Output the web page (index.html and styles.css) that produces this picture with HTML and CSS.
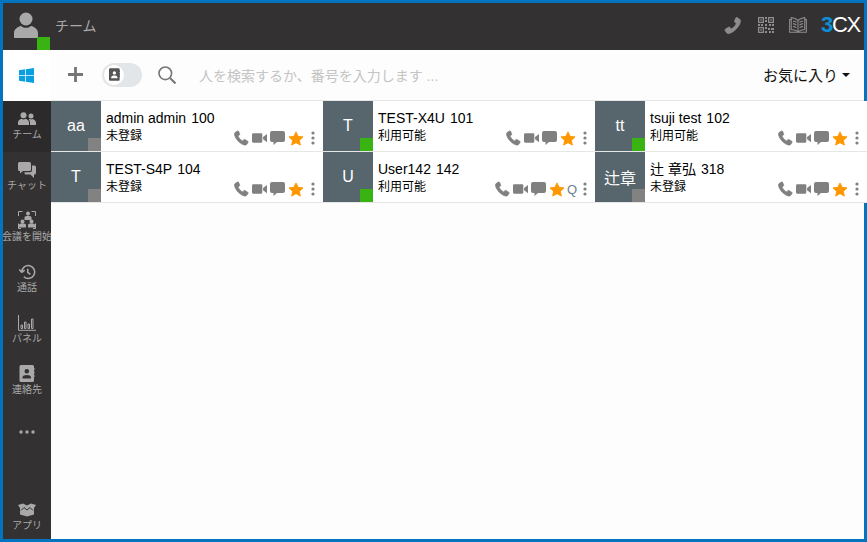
FILE: index.html
```html
<!DOCTYPE html>
<html lang="ja">
<head>
<meta charset="utf-8">
<title>チーム</title>
<link rel="stylesheet" href="styles.css">
</head>
<body>
<svg class="defs" width="0" height="0" aria-hidden="true">
  <defs>
    <symbol id="i-phone" viewBox="0 0 16 16"><path d="M3.600.6 1.200 2.200C.5 2.800.4 3.600.6 4.500c1 4.700 5.900 9.800 10.600 11 .9.200 1.700 0 2.300-.7l1.400-2.100c.3-.5.200-1-.3-1.300l-3-1.800c-.4-.2-.9-.2-1.200.2l-.9 1.100c-.2.200-.5.300-.8.100-1.700-1-3.300-2.700-4.200-4.500-.1-.3-.1-.5.100-.7l1.100-.9c.4-.3.500-.8.300-1.200L4.900.9C4.600.4 4.100.3 3.600.6Z"/></symbol>
    <symbol id="i-video" viewBox="0 0 16 12"><rect x="0" y="1" width="11" height="10" rx="1.200"/><path d="M11.800 4.800 16 1.600v8.800l-4.200-3.200Z"/></symbol>
    <symbol id="i-chat" viewBox="0 0 15 14"><path d="M2 0h11a2 2 0 0 1 2 2v7a2 2 0 0 1-2 2H7l-3.500 3v-3H2a2 2 0 0 1-2-2V2a2 2 0 0 1 2-2Z"/></symbol>
    <symbol id="i-star" viewBox="-1 -1 17 16"><path d="m7.500 0 2.200 4.700 5.300.6-3.900 3.500 1 5.200-4.600-2.600L2.900 14l1-5.200L0 5.300l5.300-.6Z" stroke="#ff9800" stroke-width="1" stroke-linejoin="round"/></symbol>
    <symbol id="i-dots" viewBox="0 0 4 14"><circle cx="2" cy="2" r="1.600"/><circle cx="2" cy="7" r="1.600"/><circle cx="2" cy="12" r="1.600"/></symbol>
    <symbol id="i-person" viewBox="0 0 24 26"><circle cx="12" cy="7" r="6.500"/><path d="M0 25v-4c0-4 4-6.500 7-7 1.500 1.300 3 1.800 5 1.800s3.500-.5 5-1.800c3 .5 7 3 7 7v4c0 .6-.4 1-1 1H1c-.6 0-1-.4-1-1Z"/></symbol>
  </defs>
</svg>
<div class="app">
  <header class="topbar">
    <div class="me">
      <svg class="me-icon"><use href="#i-person"/></svg>
      <span class="status status-on me-status"></span>
    </div>
    <span class="title">チーム</span>
    <div class="top-icons">
      <svg class="top-phone"><use href="#i-phone"/></svg>
      <svg class="top-qr" viewBox="0 0 16 16">
        <path d="M0 0h6v6H0Zm1.300 1.300v3.400h3.400V1.300ZM10 0h6v6h-6Zm1.300 1.300v3.400h3.400V1.300ZM0 10h6v6H0Zm1.300 1.300v3.400h3.400v-3.400Z"/>
        <path d="M2.300 2.300h1.400v1.400H2.300Zm10 0h1.400v1.400h-1.400Zm-10 10h1.400v1.400H2.300ZM7 0h2v2H7Zm0 3h2v2H7ZM0 7h2v2H0Zm3 0h2v2H3Zm4 0h2v2H7Zm4 0h2v2h-2Zm3 0h2v2h-2ZM7 10h2v2H7Zm3 1h2v2h-2Zm3 0h3v2h-3ZM7 14h2v2H7Zm4 0h2v2h-2Zm3 0h2v2h-2Z"/>
      </svg>
      <svg class="top-book" viewBox="0 0 20 18" fill="none" stroke-width="1.200">
        <path d="M10 4C8 2 5 1 2.500.8V14c3 .2 5.500 1 7.500 2.500 2-1.500 4.500-2.300 7.500-2.500V.8C15 1 12 2 10 4Zm0 0v12.500"/>
        <path d="M2.500 3H.7v14H10h9.300V3h-1.800M4.500 4.500c1.300.2 2.600.7 3.800 1.400M4.500 7.500c1.300.2 2.600.7 3.800 1.400M4.500 10.500c1.300.2 2.600.7 3.800 1.400M15.500 4.500c-1.300.2-2.600.7-3.800 1.400M15.500 7.500c-1.300.2-2.600.7-3.800 1.400M15.500 10.500c-1.300.2-2.600.7-3.800 1.400"/>
      </svg>
      <span class="logo3cx"><span class="logo-3">3</span>CX</span>
    </div>
  </header>
  <div class="body">
    <aside class="side">
      <div class="start">
        <svg class="win" viewBox="0 0 16 16"><path d="M0 2.300 6.500 1.400v6.200H0Zm7.300-1L16 0v7.600H7.300ZM0 8.400h6.500v6.200L0 13.700Zm7.300 0H16V16l-8.700-1.300Z"/></svg>
      </div>
      <nav class="nav">
        <a class="nav-item active">
          <svg class="nav-icon" viewBox="0 0 18 14"><circle cx="5.500" cy="3.200" r="3"/><circle cx="13" cy="4" r="2.500"/><path d="M0 13v-2.500C0 8.500 2 7 3.500 6.800c1.200.8 2.800.8 4 0C9 7 11 8.500 11 10.500V13Zm12 0v-2.500c0-1.200-.5-2.200-1.300-3 .7-.4 1-.5 1.300-.5.800.5 1.700.5 2 0 1.500.2 4 1.500 4 3.500V13Z"/></svg>
          <span>チーム</span>
        </a>
        <a class="nav-item">
          <svg class="nav-icon" viewBox="0 0 18 16"><path d="M1.500 0h10A1.500 1.500 0 0 1 13 1.500v6A1.500 1.500 0 0 1 11.500 9H5l-3 2.500V9h-.5A1.500 1.500 0 0 1 0 7.500v-6A1.500 1.500 0 0 1 1.500 0Z"/><path d="M14 3.500h2.500A1.500 1.500 0 0 1 18 5v6a1.500 1.500 0 0 1-1.500 1.500H16V16l-3.500-3.500H8A1.500 1.500 0 0 1 6.500 11v-.8h5.500A2 2 0 0 0 14 8.200Z"/></svg>
          <span>チャット</span>
        </a>
        <a class="nav-item">
          <svg class="nav-icon nav-meet" viewBox="0 0 18 18"><path d="M.5 5V.5h4M13.500.5h4V5M.5 12.500v5h2.500M15 17.500h2.500v-5" fill="none" stroke="#aaa"/><circle cx="10" cy="2.500" r="2"/><path d="M6.500 9V6.500c0-1 1.500-1.800 3.500-1.800s3.500.8 3.500 1.800V9Z"/><circle cx="4.500" cy="10.500" r="2"/><path d="M1 16.500V14c0-1 1.500-1.800 3.500-1.800S8 13 8 14v2.500Z"/><circle cx="13.500" cy="10.500" r="2"/><path d="M10 16.500V14c0-1 1.500-1.800 3.500-1.800S17 13 17 14v2.500Z"/></svg>
          <span>会議を開始</span>
        </a>
        <a class="nav-item">
          <svg class="nav-icon" viewBox="0 0 18 17"><path d="M3.500 8.500a6.800 6.800 0 1 1 2.200 5M3.500 9 .8 5.800M3.500 9l3-2.500M9.800 5v4l2.800 2" fill="none" stroke="#aaa" stroke-width="1.600"/></svg>
          <span>通話</span>
        </a>
        <a class="nav-item">
          <svg class="nav-icon" viewBox="0 0 18 16"><path d="M.5 0v15.300H18M3 10h1.500v3.500H3Zm3.500-3H8v6.500H6.500ZM10 9h1.500v4.500H10Zm3.500-5H15v9.500h-1.500Z" fill="none" stroke="#aaa"/></svg>
          <span>パネル</span>
        </a>
        <a class="nav-item">
          <svg class="nav-icon nav-book" viewBox="0 0 15 17"><path fill-rule="evenodd" d="M1.500 0H13a1.500 1.500 0 0 1 1.500 1.500V3H15v2h-.5v1.500H15v2h-.5V10H15v2h-.5v3.500A1.500 1.500 0 0 1 13 17H1.500A1.500 1.500 0 0 1 0 15.500v-14A1.500 1.500 0 0 1 1.500 0ZM7.300 4a2.300 2.300 0 1 0 0 4.600 2.300 2.300 0 0 0 0-4.600ZM3 13.500h8.500v-1.200C11.500 10.800 9.500 10 7.300 10S3 10.800 3 12.300Z"/></svg>
          <span>連絡先</span>
        </a>
        <a class="nav-item nav-more">
          <svg class="more-icon" viewBox="0 0 16 4"><circle cx="2" cy="2" r="1.700"/><circle cx="8" cy="2" r="1.700"/><circle cx="14" cy="2" r="1.700"/></svg>
        </a>
        <a class="nav-item nav-apps">
          <svg class="nav-icon" viewBox="0 0 18 13"><path d="M0 1.500 5 0l4 2 4-2 5 1.500-2 3V11l-7 2-7-2V4.500Z"/><path d="m3 7 3-3 3 2.500L12 4l3 3" fill="none" stroke="#333131"/></svg>
          <span>アプリ</span>
        </a>
      </nav>
    </aside>
    <main class="main">
      <div class="toolbar">
        <svg class="plus" viewBox="0 0 16 16"><path d="M6.500 0h3v6.500H16v3H9.500V16h-3V9.500H0v-3h6.500Z"/></svg>
        <div class="toggle"><span class="knob"><svg class="knob-icon" viewBox="0 0 15 17"><path fill-rule="evenodd" d="M1.500 0H13a1.500 1.500 0 0 1 1.500 1.500V3H15v2h-.5v1.500H15v2h-.5V10H15v2h-.5v3.500A1.500 1.500 0 0 1 13 17H1.500A1.500 1.500 0 0 1 0 15.500v-14A1.500 1.500 0 0 1 1.500 0ZM7.300 4a2.300 2.300 0 1 0 0 4.600 2.300 2.300 0 0 0 0-4.600ZM3 13.500h8.500v-1.200C11.500 10.800 9.500 10 7.300 10S3 10.800 3 12.300Z"/></svg></span></div>
        <svg class="search" viewBox="0 0 18 18" fill="none"><circle cx="7.300" cy="7.300" r="6.300" stroke-width="1.600"/><path d="m12 12 5.500 5.500" stroke-width="2"/></svg>
        <span class="search-text">人を検索するか、番号を入力します ...</span>
        <button class="fav">お気に入り<span class="caret"></span></button>
      </div>
      <div class="grid">
        <article class="card">
          <div class="avatar">aa<span class="status status-off"></span></div>
          <div class="info"><div class="name">admin admin<span class="ext">100</span></div><div class="state">未登録</div></div>
          <div class="actions">
            <svg class="a-phone"><use href="#i-phone"/></svg><svg class="a-video"><use href="#i-video"/></svg><svg class="a-chat"><use href="#i-chat"/></svg><svg class="a-star"><use href="#i-star"/></svg><svg class="a-dots"><use href="#i-dots"/></svg>
          </div>
        </article>
        <article class="card">
          <div class="avatar">T<span class="status status-on"></span></div>
          <div class="info"><div class="name">TEST-X4U<span class="ext">101</span></div><div class="state">利用可能</div></div>
          <div class="actions">
            <svg class="a-phone"><use href="#i-phone"/></svg><svg class="a-video"><use href="#i-video"/></svg><svg class="a-chat"><use href="#i-chat"/></svg><svg class="a-star"><use href="#i-star"/></svg><svg class="a-dots"><use href="#i-dots"/></svg>
          </div>
        </article>
        <article class="card">
          <div class="avatar">tt<span class="status status-on"></span></div>
          <div class="info"><div class="name">tsuji test<span class="ext">102</span></div><div class="state">利用可能</div></div>
          <div class="actions">
            <svg class="a-phone"><use href="#i-phone"/></svg><svg class="a-video"><use href="#i-video"/></svg><svg class="a-chat"><use href="#i-chat"/></svg><svg class="a-star"><use href="#i-star"/></svg><svg class="a-dots"><use href="#i-dots"/></svg>
          </div>
        </article>
        <article class="card">
          <div class="avatar">T<span class="status status-off"></span></div>
          <div class="info"><div class="name">TEST-S4P<span class="ext">104</span></div><div class="state">未登録</div></div>
          <div class="actions">
            <svg class="a-phone"><use href="#i-phone"/></svg><svg class="a-video"><use href="#i-video"/></svg><svg class="a-chat"><use href="#i-chat"/></svg><svg class="a-star"><use href="#i-star"/></svg><svg class="a-dots"><use href="#i-dots"/></svg>
          </div>
        </article>
        <article class="card">
          <div class="avatar">U<span class="status status-on"></span></div>
          <div class="info"><div class="name">User142<span class="ext">142</span></div><div class="state">利用可能</div></div>
          <div class="actions">
            <svg class="a-phone"><use href="#i-phone"/></svg><svg class="a-video"><use href="#i-video"/></svg><svg class="a-chat"><use href="#i-chat"/></svg><svg class="a-star"><use href="#i-star"/></svg><span class="queue">Q</span><svg class="a-dots"><use href="#i-dots"/></svg>
          </div>
        </article>
        <article class="card">
          <div class="avatar">辻章<span class="status status-off"></span></div>
          <div class="info"><div class="name">辻 章弘<span class="ext">318</span></div><div class="state">未登録</div></div>
          <div class="actions">
            <svg class="a-phone"><use href="#i-phone"/></svg><svg class="a-video"><use href="#i-video"/></svg><svg class="a-chat"><use href="#i-chat"/></svg><svg class="a-star"><use href="#i-star"/></svg><svg class="a-dots"><use href="#i-dots"/></svg>
          </div>
        </article>
      </div>
    </main>
  </div>
</div>
</body>
</html>
```
FILE: styles.css
```css
* { box-sizing: border-box; }
html, body { height: 100%; margin: 0; }
body {
  font-family: "Liberation Sans", "Noto Sans CJK JP", sans-serif;
  background: #fff;
  color: #000;
  overflow: hidden;
}
.defs { position: absolute; }
.app {
  height: 100%;
  border: 3px solid #0274c0;
  display: flex;
  flex-direction: column;
}
.topbar {
  height: 47px;
  flex: none;
  background: #333131;
  display: flex;
  align-items: center;
  color: #a9a9a9;
}
.me {
  position: relative;
  width: 47px;
  height: 47px;
  flex: none;
}
.me-icon {
  position: absolute;
  left: 11px;
  top: 9px;
  width: 24px;
  height: 26px;
  fill: #a9a9a9;
}
.status { position: absolute; right: 0; bottom: 0; width: 13px; height: 13px; }
.status-on { background: #38b311; }
.status-off { background: #828282; }
.title { margin: 0 0 3px 5px; font-size: 14px; }
.top-icons { margin: 0 0 3px auto; display: flex; align-items: center; }
.top-phone { width: 17px; height: 17px; fill: #8d8d8d; stroke: #8d8d8d; stroke-width: 0.8; transform: scaleX(-1); margin-right: 17px; }
.top-qr { width: 16px; height: 16px; fill: #8d8d8d; margin-right: 15px; }
.top-book { width: 18px; height: 18px; stroke: #8d8d8d; margin-right: 14px; }
.logo3cx {
  font-size: 22px;
  line-height: 24px;
  letter-spacing: -1.3px;
  color: #fff;
  margin-right: 4px;
}
.logo-3 { color: #0b8fd6; font-weight: 700; }
.body { flex: 1; display: flex; min-height: 0; }
.side { width: 48px; flex: none; display: flex; flex-direction: column; }
.start {
  height: 51px;
  flex: none;
  display: flex;
  align-items: center;
  justify-content: center;
  padding: 0 2px 1px 0;
}
.win { width: 15px; height: 15px; fill: #0a9fe0; }
.nav {
  flex: 1;
  background: #333131;
  display: flex;
  flex-direction: column;
}
.nav-item {
  height: 51px;
  flex: none;
  display: flex;
  flex-direction: column;
  align-items: center;
  justify-content: center;
  gap: 1px;
  padding-bottom: 2px;
  color: #a9a9a9;
  font-size: 10px;
  line-height: 13px;
  white-space: nowrap;
}
.nav-item.active { background: #2c2a2a; }
.nav-icon { width: 18px; height: 16px; fill: #a9a9a9; }
.nav-meet { height: 18px; margin-top: -2px; }
.nav-book { height: 17px; }
.nav-more { height: 50px; padding-bottom: 0; }
.more-icon { width: 16px; height: 4px; fill: #a9a9a9; }
.nav-apps { margin-top: auto; height: 50px; padding: 6px 0 0; }
.main { flex: 1; min-width: 0; display: flex; flex-direction: column; background: #fdfdfd; }
.toolbar {
  height: 51px;
  flex: none;
  display: flex;
  align-items: center;
  padding: 0 14px 1px 17px;
  border-bottom: 1px solid #e6e6e6;
}
.plus { width: 15px; height: 15px; fill: #757575; flex: none; }
.toggle {
  width: 40px;
  height: 24px;
  margin-left: 19px;
  border-radius: 12px;
  background: #e3e6e9;
  display: flex;
  align-items: center;
  padding-left: 1px;
}
.knob {
  width: 20px;
  height: 20px;
  border-radius: 50%;
  background: #fff;
  display: flex;
  align-items: center;
  justify-content: center;
  margin-left: 1px;
}
.knob-icon { width: 11px; height: 13px; fill: #555; }
.search { width: 18px; height: 18px; stroke: #757575; margin-left: 16px; flex: none; }
.search-text { margin-left: 23px; font-size: 14px; color: #c4c4c4; }
.fav {
  margin-left: auto;
  border: 0;
  background: none;
  padding: 0;
  font: inherit;
  font-size: 15px;
  color: #111;
  display: flex;
  align-items: center;
}
.caret {
  margin-left: 4px;
  border-left: 4px solid transparent;
  border-right: 4px solid transparent;
  border-top: 4px solid #111;
}
.grid {
  display: grid;
  grid-template-columns: repeat(3, 272px);
  grid-auto-rows: 51px;
}
.card {
  display: flex;
  position: relative;
  background: #fff;
  border-bottom: 1px solid #e6e6e6;
}
.avatar {
  position: relative;
  width: 50px;
  flex: none;
  background: #57656d;
  color: #fff;
  font-size: 16px;
  display: flex;
  align-items: center;
  justify-content: center;
  white-space: nowrap;
}
.info { padding: 9px 0 0 5px; }
.name { font-size: 14px; line-height: 17px; }
.ext { margin-left: 5px; }
.state { font-size: 12px; line-height: 17px; margin-top: 1px; }
.actions {
  position: absolute;
  right: 8px;
  bottom: 5px;
  display: flex;
  align-items: center;
  height: 16px;
}
.a-phone { width: 15px; height: 16px; fill: #808080; stroke: #808080; stroke-width: 0.8; margin-right: 3px; }
.a-video { width: 15px; height: 12px; fill: #808080; margin-right: 3px; }
.a-chat { width: 15px; height: 14px; fill: #808080; margin-right: 3px; }
.a-star { width: 16px; height: 15px; fill: #ff9800; }
.a-dots { width: 4px; height: 14px; fill: #808080; margin-left: 7px; }
.queue { font-size: 13px; color: #6e8090; margin: 0 -1px 0 2px; }
```
